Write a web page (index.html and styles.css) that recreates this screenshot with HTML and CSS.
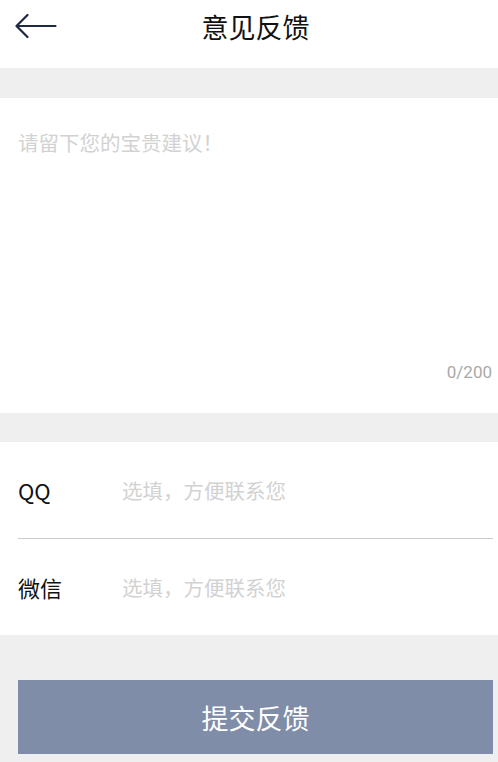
FILE: index.html
```html
<!DOCTYPE html>
<html lang="zh-CN">
<head>
<meta charset="utf-8">
<title>意见反馈</title>
<link rel="stylesheet" href="styles.css">
</head>
<body>
<header class="topbar">
  <div class="topbar-left">
    <svg class="back-icon" width="42" height="26" viewBox="0 0 42 26" aria-hidden="true">
      <path d="M1.5 13 H40.5 M12.5 2 L1.5 13 L12.5 24" fill="none" stroke="#1f2942" stroke-width="2.2" stroke-linecap="round" stroke-linejoin="round"/>
    </svg>
  </div>
  <h1 class="topbar-title">意见反馈</h1>
  <div class="topbar-right"></div>
</header>

<main class="page">
  <section class="card feedback-card">
    <textarea class="feedback-input" placeholder="请留下您的宝贵建议！" maxlength="200"></textarea>
    <div class="counter">0/200</div>
  </section>

  <section class="card contact-card">
    <div class="contact-row">
      <span class="contact-label">QQ</span>
      <input class="contact-input" type="text" placeholder="选填，方便联系您">
    </div>
    <div class="contact-row">
      <span class="contact-label">微信</span>
      <input class="contact-input" type="text" placeholder="选填，方便联系您">
    </div>
  </section>

  <div class="actions">
    <button class="submit-btn" type="button">提交反馈</button>
  </div>
</main>
</body>
</html>
```

FILE: styles.css
```css
* {
  box-sizing: border-box;
}

html, body {
  margin: 0;
  padding: 0;
}

body {
  background: #efefef;
  font-family: "Noto Sans CJK SC", "Noto Sans", sans-serif;
  color: #111111;
  width: 498px;
  min-height: 762px;
}

.topbar {
  height: 68px;
  background: #ffffff;
  display: grid;
  grid-template-columns: 1fr auto 1fr;
  align-items: center;
  padding: 0 5px 16px 18px;
}

.topbar-left {
  display: flex;
  align-items: center;
}

.back-icon {
  display: block;
  margin-left: -3px;
}

.topbar-title {
  margin: 0;
  font-size: 27px;
  font-weight: 400;
  line-height: 1;
  color: #111111;
}

.page {
  padding-top: 30px;
  display: flex;
  flex-direction: column;
}

.card {
  background: #ffffff;
}

.feedback-card {
  height: 315px;
  display: flex;
  flex-direction: column;
  padding: 30px 6px 30px 18px;
}

.feedback-input {
  flex: 1;
  border: none;
  outline: none;
  resize: none;
  padding: 0;
  margin: 0;
  font-family: "Noto Sans CJK SC", "Noto Sans", sans-serif;
  font-size: 20.5px;
  line-height: 28px;
  color: #333333;
  background: transparent;
}

.feedback-input::placeholder {
  color: #d2d2d2;
}

.counter {
  text-align: right;
  font-family: Roboto, "Noto Sans", sans-serif;
  font-size: 17px;
  line-height: 22px;
  color: #a9a9a9;
}

.contact-card {
  margin-top: 29px;
  display: flex;
  flex-direction: column;
}

.contact-row {
  height: 96px;
  margin: 0 5px 0 18px;
  display: flex;
  align-items: center;
}

.contact-row + .contact-row {
  border-top: 1px solid #cccccc;
  height: 97px;
}

.contact-label {
  width: 104px;
  flex: none;
  font-size: 22px;
  line-height: 30px;
  color: #111111;
}

.contact-input {
  flex: 1;
  border: none;
  outline: none;
  padding: 0;
  margin: 0;
  background: transparent;
  font-family: "Noto Sans CJK SC", "Noto Sans", sans-serif;
  font-size: 20.5px;
  line-height: 30px;
  color: #333333;
}

.contact-input::placeholder {
  color: #d2d2d2;
}

.actions {
  padding: 45px 5px 8px 18px;
}

.submit-btn {
  display: block;
  width: 100%;
  height: 74px;
  border: none;
  border-radius: 0;
  background: #7f8da8;
  color: #ffffff;
  font-family: "Noto Sans CJK SC", "Noto Sans", sans-serif;
  font-size: 27px;
  line-height: 1;
  padding: 0;
  cursor: pointer;
}
```
